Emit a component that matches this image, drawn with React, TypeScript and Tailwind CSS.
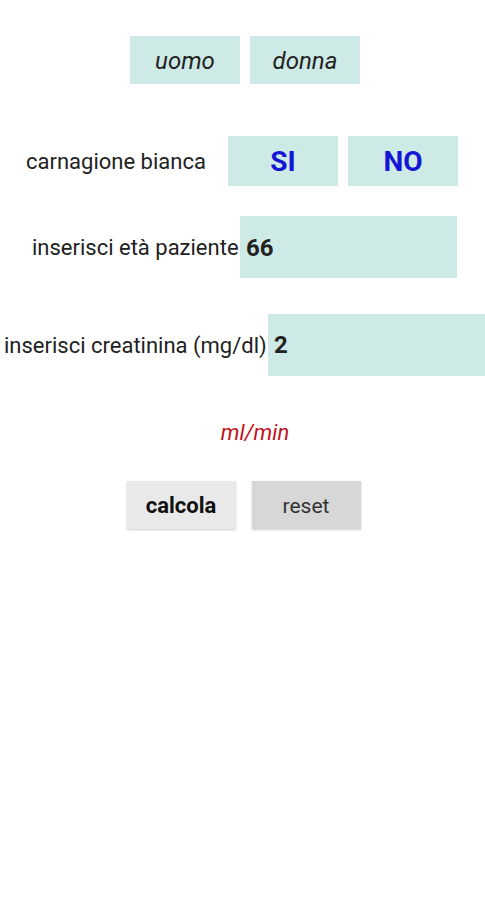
const teal = "bg-[#cdeae6]";

export default function App() {
  return (
    <div className="w-[485px] h-[900px] bg-white font-['Roboto',sans-serif] text-[#222] overflow-hidden">
      <div className="flex justify-center gap-[10px] pt-[36px] pl-[5px]">
        <button className={`${teal} w-[110px] h-[48px] pt-[2px] text-[24px] italic text-[#222]`}>uomo</button>
        <button className={`${teal} w-[110px] h-[48px] pt-[2px] text-[24px] italic text-[#222]`}>donna</button>
      </div>

      <div className="flex items-center pt-[52px] pl-[26px]">
        <span className="w-[202px] text-[22px]">carnagione bianca</span>
        <button className={`${teal} w-[110px] h-[50px] pt-[2px] text-[28px] font-bold text-[#1515d4]`}>SI</button>
        <button className={`${teal} w-[110px] h-[50px] pt-[2px] ml-[10px] text-[28px] font-bold text-[#1515d4]`}>NO</button>
      </div>

      <div className="flex items-center pt-[30px] pl-[32px]">
        <span className="w-[208px] text-[22px]">inserisci età paziente</span>
        <div className={`${teal} w-[217px] h-[62px] flex items-center pl-[6px] pt-[2px] text-[24px] font-bold`}>66</div>
      </div>

      <div className="flex items-center pt-[36px] pl-[4px]">
        <span className="w-[264px] text-[22px]">inserisci creatinina (mg/dl)</span>
        <div className={`${teal} flex-1 h-[62px] flex items-center pl-[6px] text-[24px] font-bold`}>2</div>
      </div>

      <div className="pt-[40px] pl-[25px] text-center text-[22px] italic text-[#c4121e]">ml/min</div>

      <div className="flex justify-center gap-[16px] pt-[32px] pl-[2px]">
        <button className="w-[109px] h-[48px] bg-[#e9e9e9] shadow-[0_1px_2px_rgba(0,0,0,0.2)] text-[22px] font-bold text-[#111]">calcola</button>
        <button className="w-[109px] h-[48px] pt-[3px] bg-[#d7d7d7] shadow-[0_1px_2px_rgba(0,0,0,0.2)] text-[21px] text-[#333]">reset</button>
      </div>
    </div>
  );
}
